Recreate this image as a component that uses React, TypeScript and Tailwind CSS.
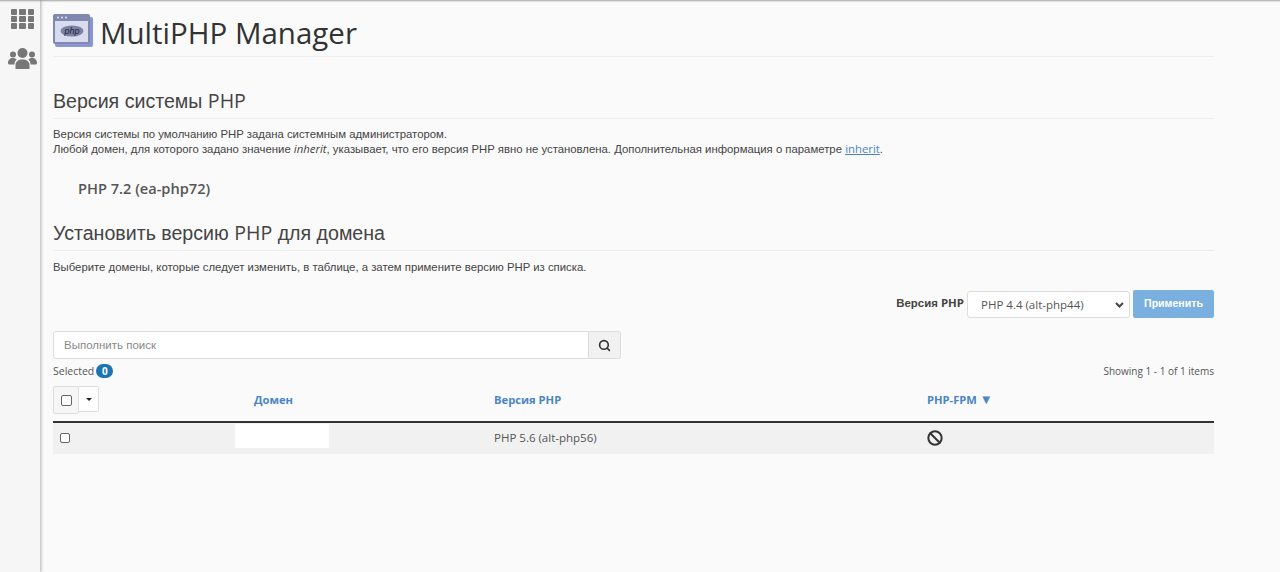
import { Search, Ban } from "lucide-react";

const sans = "font-['Liberation_Sans',Arial,sans-serif]";
const open = "font-['Open_Sans',sans-serif]";

function PhpIcon() {
  return (
    <svg width="40" height="33" viewBox="0 0 40 33" className="shrink-0">
      <rect x="2" y="3" width="38" height="30" rx="2" fill="#8a96d2" />
      <rect x="0" y="0" width="37" height="30" rx="2" fill="#7f88ae" />
      <rect x="2" y="7" width="33" height="21" fill="#d9dcee" />
      <circle cx="5" cy="3.500" r="1" fill="#e6e9f5" />
      <circle cx="9" cy="3.500" r="1" fill="#e6e9f5" />
      <circle cx="13" cy="3.500" r="1" fill="#e6e9f5" />
      <ellipse cx="19" cy="17" rx="11.500" ry="5.500" fill="#7b82a3" />
      <text x="19" y="20" textAnchor="middle" fontSize="9" fontStyle="italic" fill="#1f2438" fontFamily="Liberation Sans">
        php
      </text>
    </svg>
  );
}

function GridIcon() {
  return (
    <div className="grid grid-cols-3 gap-x-[2px] gap-y-[1px] w-[24px]">
      {Array.from({ length: 9 }).map((_, i) => (
        <div key={i} className="h-[6px] bg-[#777777] rounded-[1px]" />
      ))}
    </div>
  );
}

function UsersIcon() {
  return (
    <svg width="29" height="21" viewBox="0 0 29 21" fill="#777777">
      <circle cx="14.5" cy="5" r="5" />
      <circle cx="5" cy="6.5" r="3" />
      <circle cx="24" cy="6.5" r="3" />
      <path d="M7.5 21v-4c0-3.5 3-5.5 7-5.5s7 2 7 5.5v4z" />
      <path d="M0 15c0-3 2-5 5-5 1.500 0 2.500.5 3.500 1.500-1.500 1.500-2 3-2 5H2c-1.200 0-2-.5-2-1.500z" />
      <path d="M29 15c0-3-2-5-5-5-1.500 0-2.500.5-3.500 1.500 1.500 1.500 2 3 2 5h4.500c1.200 0 2-.5 2-1.500z" />
    </svg>
  );
}

export default function App() {
  return (
    <div className={`flex h-[572px] overflow-hidden bg-[#fafafa] text-[#444] ${sans}`}>
      <div className="w-[40px] shrink-0 bg-[#f6f6f6] shadow-[1px_0_3px_rgba(0,0,0,0.3),inset_0_3px_2px_-2px_rgba(0,0,0,0.35)] flex flex-col items-center pt-[9px] pl-[5px] gap-[19px]">
        <GridIcon />
        <UsersIcon />
      </div>
      <div className="flex-1 min-w-0 pl-[13px] pr-[66px] shadow-[inset_0_3px_2px_-2px_rgba(0,0,0,0.35)]">
        <div className="flex items-start h-[57px] border-b border-[#eeeeee] pt-[14px] gap-[7px]">
          <PhpIcon />
          <h1 className={`text-[29.5px] leading-[38px] text-[#333] ${open}`}>MultiPHP Manager</h1>
        </div>

        <h2 className="mt-[31px] h-[31px] text-[19.6px] leading-[26px] border-b border-[#eeeeee]">
          Версия системы <span className={open}>PHP</span>
        </h2>
        <p className="mt-[8px] text-[11.35px] leading-[15px]">
          Версия системы по умолчанию PHP задана системным администратором.
          <br />
          Любой домен, для которого задано значение <i className={`leading-[0] ${open}`}>inherit</i>, указывает, что его версия PHP явно не
          установлена. Дополнительная информация о параметре{" "}
          <a className={`leading-[0] text-[#4a86c5] underline ${open}`}>inherit</a>.
        </p>
        <div className={`mt-[21px] ml-[25px] text-[14.6px] leading-[20px] font-semibold text-[#555] ${open}`}>PHP 7.2 (ea-php72)</div>

        <h2 className="mt-[21px] h-[32px] text-[19.6px] leading-[28px] border-b border-[#eeeeee]">
          Установить версию <span className={open}>PHP</span> для домена
        </h2>
        <p className="mt-[9px] text-[11.35px] leading-[15px]">
          Выберите домены, которые следует изменить, в таблице, а затем примените версию PHP из списка.
        </p>

        <div className="mt-[15px] flex justify-end items-center h-[28px]">
          <span className="text-[11.4px] font-bold mr-[3px] -mt-[2px]">
            Версия <span className={open}>PHP</span>
          </span>
          <div className={`relative w-[163px] h-[27px] bg-white border border-[#dddddd] rounded-[3px] pl-[13px] text-[11.5px] leading-[25px] text-[#555] ${open}`}>
            PHP 4.4 (alt-php44)
            <svg width="9" height="6" viewBox="0 0 9 6" className="absolute right-[5px] top-[10px]" fill="none" stroke="#444" strokeWidth="2">
              <path d="M1 1l3.500 3.500L8 1" />
            </svg>
          </div>
          <button className="ml-[3px] w-[81px] h-[28px] bg-[#7ab0e0] rounded-[2px] text-white text-[10.6px] font-bold">Применить</button>
        </div>

        <div className="mt-[13px] flex w-[568px] h-[28px]">
          <div className="flex-1 h-full bg-white border border-[#dddddd] rounded-l-[3px] pl-[10px] text-[11.5px] leading-[26px] text-[#888]">
            Выполнить поиск
          </div>
          <div className="w-[32px] h-full bg-[#f1f1f1] border border-l-0 border-[#dddddd] rounded-r-[3px] flex items-center justify-center">
            <Search size={13} strokeWidth={3} color="#333" />
          </div>
        </div>

        <div className={`mt-[3px] flex justify-between items-center h-[18px] text-[10.5px] text-[#555] ${open}`}>
          <div className="flex items-center gap-[2px]">
            <span className="mt-[1px]">Selected</span>
            <span className="w-[17px] h-[14px] rounded-full bg-[#1b74b4] text-white font-bold text-[10px] leading-[14px] text-center">0</span>
          </div>
          <span className="text-[10px]">Showing 1 - 1 of 1 items</span>
        </div>

        <div className={`mt-[6px] flex items-start h-[37px] border-b-2 border-[#333] text-[11.2px] font-bold text-[#4a86c5] leading-[28px] ${open}`}>
          <div className="w-[26px] h-[28px] bg-[#f6f6f6] border border-[#dddddd] rounded-[2px] flex items-center justify-center">
            <div className="w-[11px] h-[11px] bg-white border border-[#666] rounded-[2px]" />
          </div>
          <div className="w-[20px] h-[26px] bg-white border border-l-0 border-[#dddddd] rounded-r-[2px] flex items-center justify-center">
            <div className="w-0 h-0 border-x-[3px] border-x-transparent border-t-[3px] border-t-[#222]" />
          </div>
          <span className="ml-[155px] w-[240px]">Домен</span>
          <span className="w-[433px]">Версия PHP</span>
          <span>
            PHP-FPM <span className="text-[13px] leading-[0]">▼</span>
          </span>
        </div>

        <div className="h-[31px] pb-[2px] bg-[#f1f1f1] grid grid-cols-[182px_259px_433px_1fr] items-center">
          <div className="pl-[7px]">
            <div className="w-[10px] h-[10px] bg-white border border-[#666] rounded-[2px]" />
          </div>
          <div className="h-[24px] w-[94px] bg-white self-start mt-[1px]" />
          <div className={`text-[11.5px] text-[#555] ${open}`}>PHP 5.6 (alt-php56)</div>
          <Ban size={16} strokeWidth={3} color="#333" />
        </div>
      </div>
    </div>
  );
}
